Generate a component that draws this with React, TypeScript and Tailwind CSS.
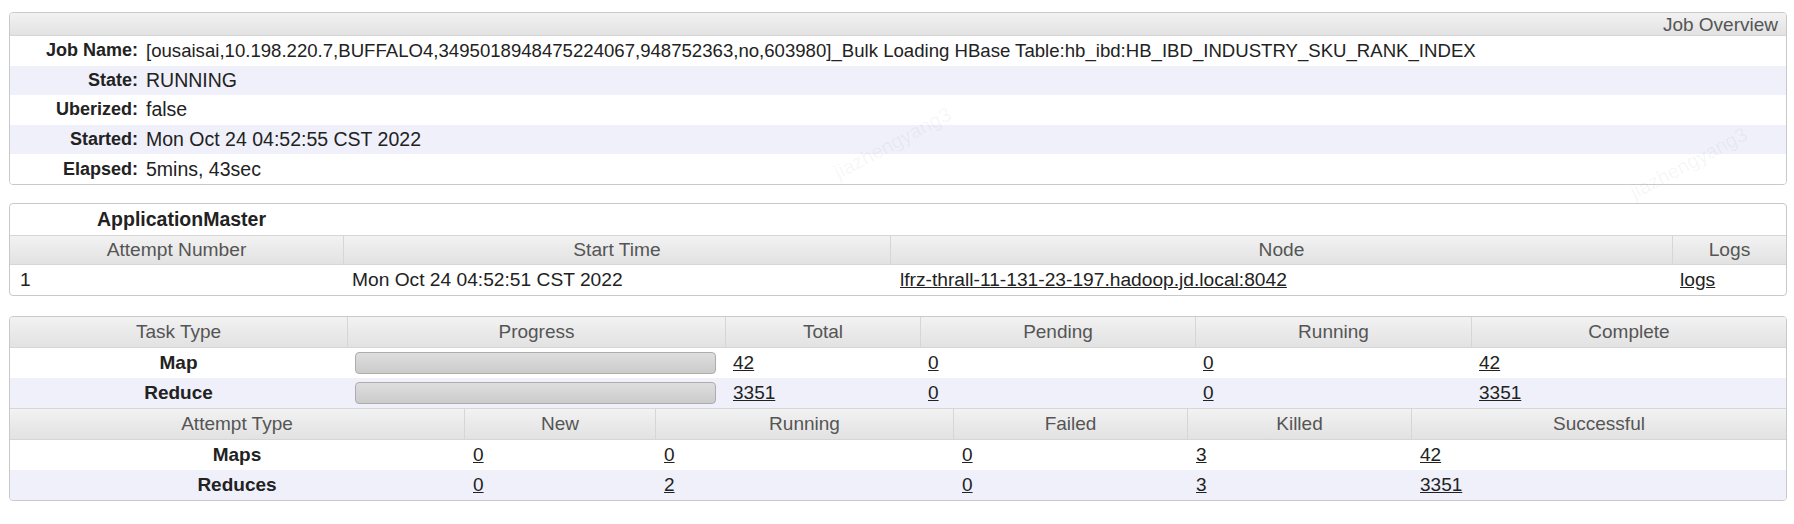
import React from "react";

const headBg = "bg-gradient-to-b from-[#f2f2f2] to-[#e2e2e2]";

function Overview() {
  const rows: [string, string, string][] = [
    ["Job Name:", "[ousaisai,10.198.220.7,BUFFALO4,3495018948475224067,948752363,no,603980]_Bulk Loading HBase Table:hb_ibd:HB_IBD_INDUSTRY_SKU_RANK_INDEX", "text-[18.6px]"],
    ["State:", "RUNNING", "text-[19.5px]"],
    ["Uberized:", "false", "text-[19.5px]"],
    ["Started:", "Mon Oct 24 04:52:55 CST 2022", "text-[19.5px]"],
    ["Elapsed:", "5mins, 43sec", "text-[19.5px]"],
  ];
  return (
    <div className="w-[1778px] rounded-[4px] border border-[#c9c9c9] overflow-hidden">
      <div className={`h-[23px] border-b border-[#d6d6d6] ${headBg} pr-[8px] text-right text-[19px] leading-[23px] text-[#555]`}>
        Job Overview
      </div>
      {rows.map(([k, v, size], i) => (
        <div
          key={k}
          className={`flex h-[29.6px] items-center text-[18px] ${i % 2 ? "bg-[#eff0fa]" : "bg-white"}`}
        >
          <div className="w-[128px] shrink-0 text-right font-bold">{k}</div>
          <div className={`pl-[8px] ${size}`}>{v}</div>
        </div>
      ))}
    </div>
  );
}

function AppMaster() {
  const cols = "grid grid-cols-[333px_547px_782px_114px]";
  return (
    <div className="mt-[18px] w-[1778px] rounded-[4px] border border-[#c9c9c9] overflow-hidden text-[19.2px]">
      <div className={`${cols} h-[31px] items-center`}>
        <div className="pl-[10px] text-center text-[19.5px] font-bold">ApplicationMaster</div>
      </div>
      <div className={`${cols} h-[30px] border-y border-[#d6d6d6] ${headBg} text-[#555]`}>
        {["Attempt Number", "Start Time", "Node", "Logs"].map((h, i) => (
          <div key={h} className={`flex items-center justify-center ${i ? "border-l border-[#d6d6d6]" : ""}`}>
            {h}
          </div>
        ))}
      </div>
      <div className={`${cols} h-[30px] items-center`}>
        <div className="pl-[10px]">1</div>
        <div className="pl-[9px]">Mon Oct 24 04:52:51 CST 2022</div>
        <div className="pl-[10px]">
          <a className="underline">lfrz-thrall-11-131-23-197.hadoop.jd.local:8042</a>
        </div>
        <div className="pl-[8px]">
          <a className="underline">logs</a>
        </div>
      </div>
    </div>
  );
}

function HeadRow({ cols, names }: { cols: string; names: string[] }) {
  return (
    <div className={`${cols} h-[31px] border-b border-[#d6d6d6] ${headBg} text-[#555]`}>
      {names.map((h, i) => (
        <div key={i} className={`flex items-center justify-center ${i ? "border-l border-[#d6d6d6]" : ""}`}>
          {h}
        </div>
      ))}
    </div>
  );
}

function Bar() {
  return (
    <div className="ml-[8px] h-[22px] w-[361px] rounded-[4px] border border-[#acacac] bg-gradient-to-b from-[#dedede] to-[#cbcbcb]" />
  );
}

function Tasks() {
  const top = "grid grid-cols-[337px_378px_195px_275px_276px_315px]";
  const bot = "grid grid-cols-[454px_191px_298px_234px_224px_375px]";
  const tasks = [
    ["Map", "42", "0", "0", "42"],
    ["Reduce", "3351", "0", "0", "3351"],
  ];
  const attempts = [
    ["Maps", "0", "0", "0", "3", "42"],
    ["Reduces", "0", "2", "0", "3", "3351"],
  ];
  return (
    <div className="mt-[20px] w-[1778px] rounded-[4px] border border-[#c9c9c9] overflow-hidden text-[19px]">
      <HeadRow cols={top} names={["Task Type", "Progress", "Total", "Pending", "Running", "Complete"]} />
      {tasks.map((r, i) => (
        <div key={r[0]} className={`${top} h-[30px] items-center ${i % 2 ? "bg-[#eff0fa]" : "bg-white"}`}>
          <div className="text-center font-bold">{r[0]}</div>
          <Bar />
          {r.slice(1).map((v, j) => (
            <div key={j} className="pl-[8px]">
              <a className="underline">{v}</a>
            </div>
          ))}
        </div>
      ))}
      <div className="border-t border-[#d6d6d6]" />
      <HeadRow cols={bot} names={["Attempt Type", "New", "Running", "Failed", "Killed", "Successful"]} />
      {attempts.map((r, i) => (
        <div key={r[0]} className={`${bot} h-[30px] items-center ${i % 2 ? "bg-[#eff0fa]" : "bg-white"}`}>
          <div className="text-center font-bold">{r[0]}</div>
          {r.slice(1).map((v, j) => (
            <div key={j} className="pl-[9px]">
              <a className="underline">{v}</a>
            </div>
          ))}
        </div>
      ))}
    </div>
  );
}

function Watermark({ className }: { className: string }) {
  return (
    <div className={`pointer-events-none absolute -rotate-[28deg] text-[20px] text-black/[0.05] ${className}`}>
      jiazhengyang3
    </div>
  );
}

export default function App() {
  return (
    <div className="relative h-[524px] w-[1794px] overflow-hidden bg-white pl-[9px] pt-[12px] font-['Liberation_Sans',Arial,sans-serif] text-[#222]">
      <Overview />
      <AppMaster />
      <Tasks />
      <Watermark className="left-[828px] top-[128px]" />
      <Watermark className="left-[1624px] top-[148px]" />
    </div>
  );
}
